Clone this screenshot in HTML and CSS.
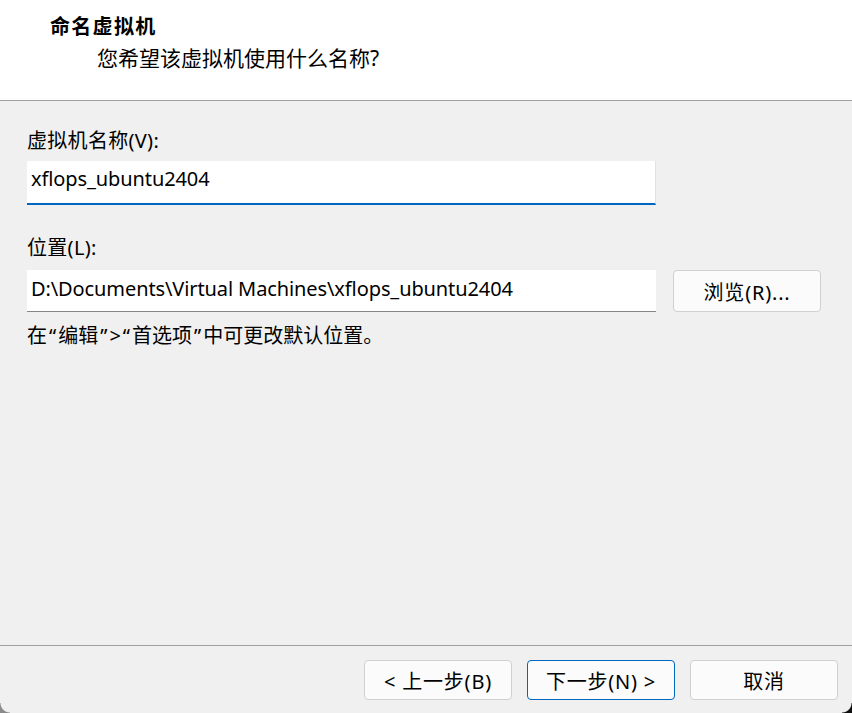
FILE: index.html
```html
<!DOCTYPE html>
<html lang="zh-CN">
<head>
<meta charset="utf-8">
<link rel="stylesheet" href="styles.css">
</head>
<body>
<div class="window">
  <div class="header">
    <div class="title">命名虚拟机</div>
    <div class="subtitle">您希望该虚拟机使用什么名称?</div>
  </div>
  <div class="main">
    <div class="label label-first">虚拟机名称(V):</div>
    <div class="field field-focus">xflops_ubuntu2404</div>
    <div class="label label-second">位置(L):</div>
    <div class="row">
      <div class="field">D:\Documents\Virtual Machines\xflops_ubuntu2404</div>
      <div class="btn btn-browse">浏览(R)...</div>
    </div>
    <div class="hint">在<span class="q">“</span>编辑<span class="q">”</span>&gt;<span class="q">“</span>首选项<span class="q">”</span>中可更改默认位置。</div>
  </div>
  <div class="footer">
    <div class="btn">&lt; 上一步(B)</div>
    <div class="btn btn-default">下一步(N) &gt;</div>
    <div class="btn">取消</div>
  </div>
  <div class="corner corner-left"></div>
  <div class="corner corner-right"></div>
</div>
</body>
</html>
```

FILE: styles.css
```css
html, body {
  margin: 0;
  padding: 0;
}
body {
  width: 852px;
  height: 713px;
  overflow: hidden;
  background: #f0f0f0;
  font-family: "Noto Sans", "Noto Sans CJK SC", sans-serif;
  color: #000;
}
.window {
  position: relative;
  display: flex;
  flex-direction: column;
  height: 713px;
  background: #f0f0f0;
}
.header {
  height: 101px;
  box-sizing: border-box;
  background: #fff;
  border-bottom: 1px solid #a0a0a0;
  padding-top: 13px;
}
.title {
  margin-left: 50px;
  font-size: 20px;
  font-weight: bold;
  line-height: 28px;
  letter-spacing: 1.3px;
}
.subtitle {
  margin-left: 97px;
  margin-top: 3px;
  font-size: 21px;
  line-height: 28px;
}
.main {
  flex: 1;
  padding: 0 27px;
}
.label {
  font-size: 20px;
  line-height: 26px;
  letter-spacing: 0.3px;
}
.label-first {
  margin-top: 27px;
  margin-bottom: 7px;
}
.label-second {
  margin-top: 30px;
  margin-bottom: 9px;
}
.field {
  width: 629px;
  height: 42px;
  box-sizing: border-box;
  background: #fff;
  border-bottom: 1px solid #868686;
  padding: 5px 0 0 4px;
  font-size: 20px;
  line-height: 28px;
  letter-spacing: -0.1px;
}
.field-focus {
  height: 44px;
  padding-top: 4px;
  border-right: 1px solid #dde3ea;
  border-bottom: 2px solid #0067c0;
}
.row {
  display: flex;
  gap: 17px;
}
.hint {
  margin-top: 11px;
  font-size: 20px;
  line-height: 26px;
}
.q {
  padding: 0 2px;
}
.btn {
  width: 148px;
  height: 40px;
  box-sizing: border-box;
  border: 1px solid #d0d0d0;
  border-radius: 4px;
  background: #fbfbfb;
  display: flex;
  align-items: center;
  justify-content: center;
  font-size: 20px;
  letter-spacing: 0.8px;
  white-space: pre;
}
.btn-browse {
  height: 42px;
}
.btn-default {
  border-color: #0067c0;
}
.footer {
  height: 68px;
  box-sizing: border-box;
  border-top: 1px solid #a0a0a0;
  display: flex;
  justify-content: flex-end;
  gap: 15px;
  padding: 14px 14px 0 0;
}
.corner {
  position: absolute;
  bottom: 0;
  width: 10px;
  height: 10px;
}
.corner-left {
  left: 0;
  background: radial-gradient(circle at 100% 0, transparent 9px, #8a8a8a 10px);
}
.corner-right {
  right: 0;
  background: radial-gradient(circle at 0 0, transparent 9px, #111 10px);
}
```
